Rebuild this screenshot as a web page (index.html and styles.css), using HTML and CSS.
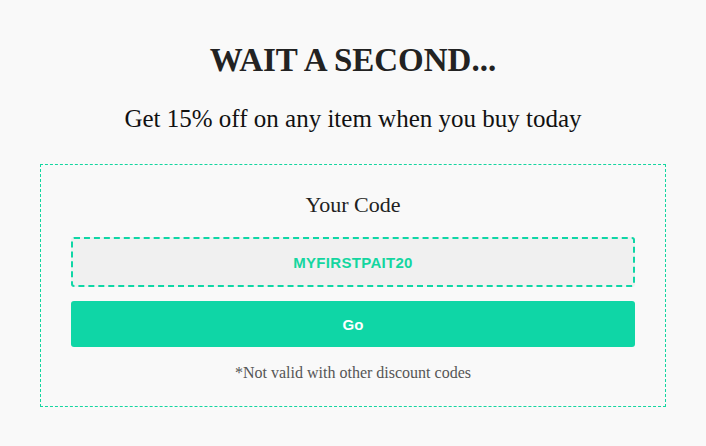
FILE: index.html
```html
<!DOCTYPE html>
<html>
<head>
<meta charset="utf-8">
<link rel="stylesheet" href="styles.css">
</head>
<body>
<main class="popup">
  <h1 class="title">WAIT A SECOND...</h1>
  <p class="subtitle">Get 15% off on any item when you buy today</p>
  <section class="coupon">
    <h2 class="coupon-label">Your Code</h2>
    <div class="code">MYFIRSTPAIT20</div>
    <button class="go">Go</button>
    <p class="note">*Not valid with other discount codes</p>
  </section>
</main>
</body>
</html>
```
FILE: styles.css
```css
html, body {
  margin: 0;
  padding: 0;
  background: #f9f9f9;
}
body {
  font-family: "Liberation Serif", "Times New Roman", serif;
  color: #1a1a1a;
}
.popup {
  width: 626px;
  margin: 0 auto;
  padding-top: 40px;
  display: flex;
  flex-direction: column;
  align-items: center;
}
.title {
  margin: 0;
  font-size: 33px;
  line-height: 40px;
  font-weight: bold;
  color: #222;
}
.subtitle {
  margin: 24px 0 0;
  font-size: 25px;
  line-height: 30px;
  color: #111;
}
.coupon {
  box-sizing: border-box;
  width: 626px;
  margin-top: 30px;
  border: 1px dashed #14d6a0;
  padding: 26px 30px 23px;
  display: flex;
  flex-direction: column;
  align-items: stretch;
}
.coupon-label {
  margin: 0;
  text-align: center;
  font-size: 22px;
  line-height: 28px;
  font-weight: normal;
  color: #222;
}
.code {
  margin-top: 18px;
  height: 50px;
  box-sizing: border-box;
  border: 2px dashed #0fd6a6;
  border-radius: 3px;
  background: #f0f0f0;
  display: flex;
  align-items: center;
  justify-content: center;
  font-family: "Liberation Sans", Arial, sans-serif;
  font-weight: bold;
  font-size: 15px;
  color: #14d6a0;
  letter-spacing: 0.3px;
}
.go {
  margin-top: 14px;
  height: 46px;
  border: 0;
  border-radius: 3px;
  background: #0fd6a6;
  color: #fff;
  font-family: "Liberation Sans", Arial, sans-serif;
  font-weight: bold;
  font-size: 15px;
}
.note {
  margin: 16px 0 0;
  text-align: center;
  font-size: 16px;
  line-height: 20px;
  color: #555;
}
```
